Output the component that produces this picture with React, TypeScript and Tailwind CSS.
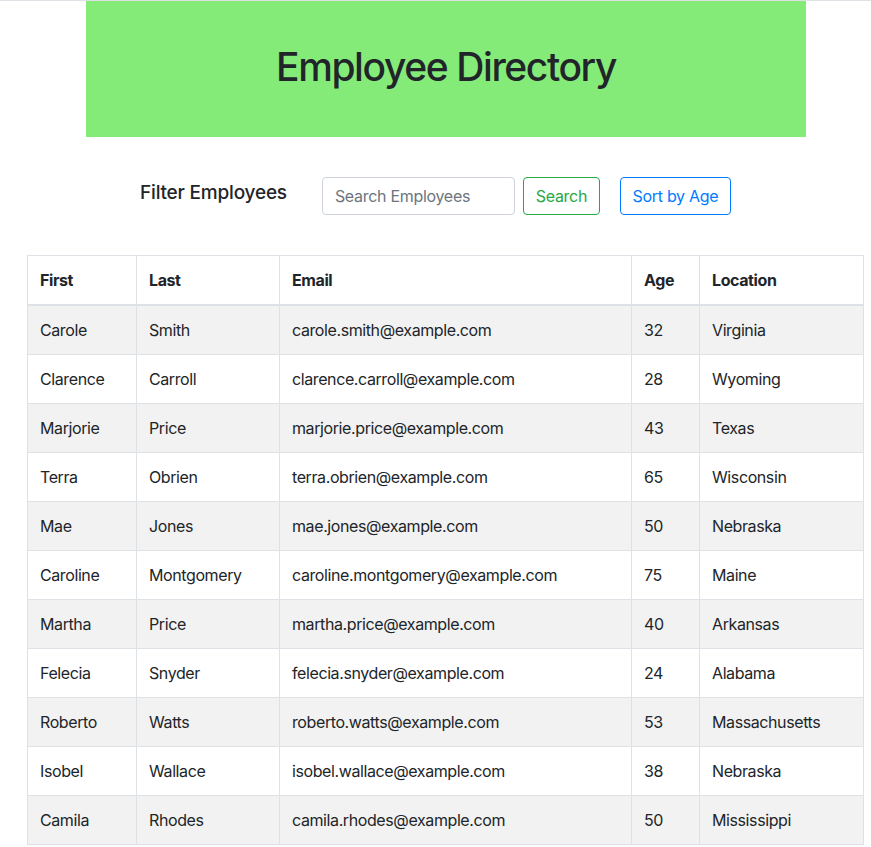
import React from "react";

const rows = [
  ["Carole", "Smith", "carole.smith@example.com", "32", "Virginia"],
  ["Clarence", "Carroll", "clarence.carroll@example.com", "28", "Wyoming"],
  ["Marjorie", "Price", "marjorie.price@example.com", "43", "Texas"],
  ["Terra", "Obrien", "terra.obrien@example.com", "65", "Wisconsin"],
  ["Mae", "Jones", "mae.jones@example.com", "50", "Nebraska"],
  ["Caroline", "Montgomery", "caroline.montgomery@example.com", "75", "Maine"],
  ["Martha", "Price", "martha.price@example.com", "40", "Arkansas"],
  ["Felecia", "Snyder", "felecia.snyder@example.com", "24", "Alabama"],
  ["Roberto", "Watts", "roberto.watts@example.com", "53", "Massachusetts"],
  ["Isobel", "Wallace", "isobel.wallace@example.com", "38", "Nebraska"],
  ["Camila", "Rhodes", "camila.rhodes@example.com", "50", "Mississippi"],
];

const widths = ["w-[109px]", "w-[143px]", "w-[352px]", "w-[68px]", "w-[164px]"];

export default function App() {
  return (
    <div className="h-[847px] overflow-hidden bg-white text-[#212529] font-['Inter','Noto_Sans',sans-serif] border-t border-[#dee2e6]">
      <div className="mx-[86px] w-[720px] bg-[#84eb79] pt-[42px] pb-[46px] text-center">
        <h1 className="text-[39px] leading-[48px] font-medium tracking-[-1.4px]">Employee Directory</h1>
      </div>
      <div className="mt-[40px] flex items-center justify-center">
        <h5 className="text-[19px] leading-[24px] font-medium mr-[35px] -mt-[6px] tracking-[-0.2px]">Filter Employees</h5>
        <input
          className="h-[38px] w-[193px] rounded-[4px] border border-[#ced4da] px-[12px] text-[16px] tracking-[-0.3px] placeholder:text-[#6c757d] outline-none"
          placeholder="Search Employees"
        />
        <button className="ml-[8px] h-[38px] w-[77px] rounded-[4px] border border-[#28a745] text-[16px] tracking-[-0.3px] text-[#28a745]">
          Search
        </button>
        <button className="ml-[20px] h-[38px] w-[111px] rounded-[4px] border border-[#007bff] text-[16px] tracking-[-0.3px] text-[#007bff]">
          Sort by Age
        </button>
      </div>
      <table className="mt-[40px] ml-[27px] w-[836px] border-collapse text-[16px] leading-[24px] tracking-[-0.4px] table-fixed">
        <thead>
          <tr>
            {["First", "Last", "Email", "Age", "Location"].map((h, i) => (
              <th
                key={h}
                className={`${widths[i]} border border-[#dee2e6] border-b-2 px-[12px] py-[12px] text-left font-bold`}
              >
                {h}
              </th>
            ))}
          </tr>
        </thead>
        <tbody>
          {rows.map((r, ri) => (
            <tr key={ri} className={ri % 2 === 0 ? "bg-[#f2f2f2]" : "bg-white"}>
              {r.map((c, ci) => (
                <td key={ci} className="border border-[#dee2e6] px-[12px] py-[12px]">
                  {c}
                </td>
              ))}
            </tr>
          ))}
        </tbody>
      </table>
    </div>
  );
}
